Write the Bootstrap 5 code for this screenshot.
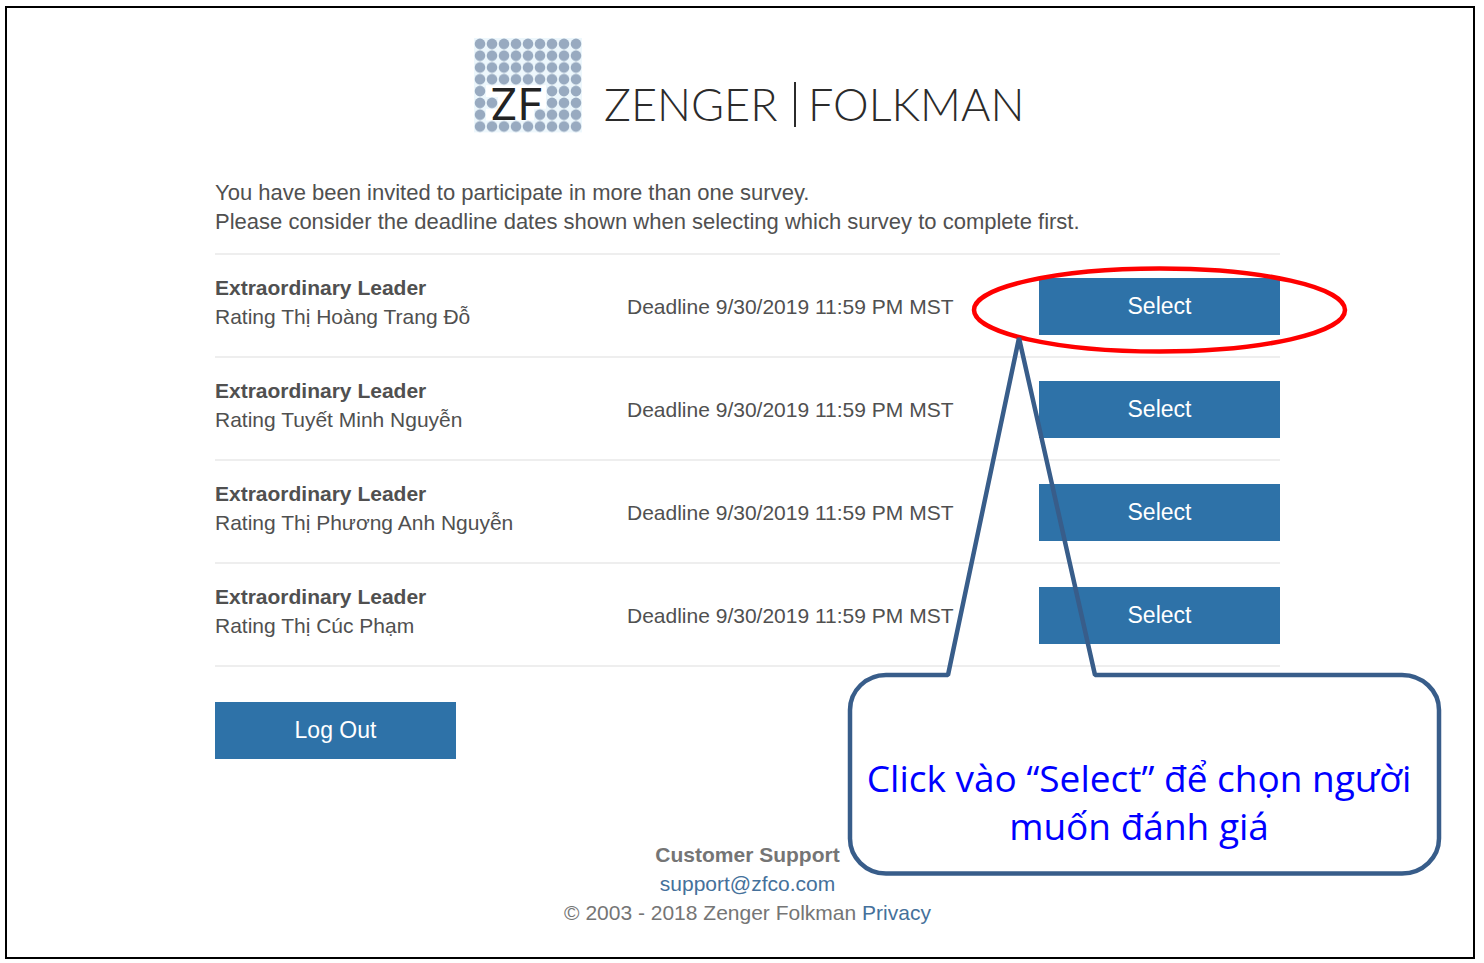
<!DOCTYPE html>
<html lang="en">
<head>
<meta charset="utf-8">
<meta name="viewport" content="width=device-width, initial-scale=1">
<title>Zenger Folkman – Surveys</title>
<link href="https://cdn.jsdelivr.net/npm/bootstrap@5.3.0/dist/css/bootstrap.min.css" rel="stylesheet">
<style>
  body { font-family: "Liberation Sans", Arial, sans-serif; font-size: 21px; line-height: 29px; color: #505050; background: #fff; }
  .page-frame { margin: 6px 9px 4px 5px; border: 2px solid #000; padding: 30px 0 30px 15px; min-height: calc(100vh - 10px); }
  .survey-page { max-width: 1065px; }
  .brand { max-width: 560px; height: 96px; }
  .brand text { font-family: Lato, sans-serif; fill: #2b2b2b; }
  .brand .monogram { font-family: Inter, sans-serif; fill: #222; }
  .intro { font-size: 22px; margin-top: 44px; margin-bottom: 17px; }
  .survey-item { display: grid; grid-template-columns: 412fr 412fr 241fr; align-items: center; padding: 18px 0 17px; border-top: 2px solid #eee; }
  .survey-name { padding-bottom: 8px; }
  .survey-list { border-bottom: 2px solid #eee; }
  .btn-zf { background: #2e72a8; color: #fff; border: 0; border-radius: 0; font-size: 23px; line-height: 29px; padding: 14px 0; }
  .btn-zf:hover { background: #245c89; color: #fff; }
  .logout { width: 241px; margin-top: 35px; }
  .page-foot { margin-top: 81px; color: #757575; }
  .page-foot a { color: #45719b; text-decoration: none; }
  .notes { left: 632px; top: 228px; width: 596px; height: 612px; pointer-events: none; }
  .note-text { left: 632px; top: 637px; width: 596px; height: 203px; padding: 79px 20px 0 8px; font-family: "Open Sans", sans-serif; font-size: 37px; line-height: 48px; color: #00f; }
</style>
</head>
<body>
<div class="page-frame">
  <main class="survey-page mx-auto position-relative">
    <header class="text-center">
      <svg class="brand w-100 overflow-visible" viewBox="-6 0 560 96" role="img" aria-label="Zenger Folkman">
        <defs>
          <pattern id="dots" width="12" height="11.8" patternUnits="userSpaceOnUse"><circle cx="6" cy="5.9" r="5.3" fill="#98aac0"/></pattern>
        </defs>
        <rect x="0" y="0" width="108" height="94.4" fill="#edf7fc"/>
        <rect x="0" y="0" width="108" height="94.4" fill="url(#dots)"/>
        <path d="M12 47.2H72V70.8H60V82.6H12V70.8H24V59H12Z" fill="#fff"/>
        <text class="monogram" x="16" y="82" font-size="44">ZF</text>
        <text x="130" y="83" font-size="45" font-weight="300">ZENGER</text>
        <path d="M321 44V89" stroke="#2b2b2b" stroke-width="2"/>
        <text x="334" y="83" font-size="45" font-weight="300">FOLKMAN</text>
      </svg>
    </header>

    <p class="intro">You have been invited to participate in more than one survey.<br>Please consider the deadline dates shown when selecting which survey to complete first.</p>

    <ul class="survey-list list-unstyled mb-0">
      <li class="survey-item"><div class="survey-name"><strong>Extraordinary Leader</strong><br>Rating Thị Hoàng Trang Đỗ</div><div>Deadline 9/30/2019 11:59 PM MST</div><button type="button" class="btn btn-zf">Select</button></li>
      <li class="survey-item"><div class="survey-name"><strong>Extraordinary Leader</strong><br>Rating Tuyết Minh Nguyễn</div><div>Deadline 9/30/2019 11:59 PM MST</div><button type="button" class="btn btn-zf">Select</button></li>
      <li class="survey-item"><div class="survey-name"><strong>Extraordinary Leader</strong><br>Rating Thị Phương Anh Nguyễn</div><div>Deadline 9/30/2019 11:59 PM MST</div><button type="button" class="btn btn-zf">Select</button></li>
      <li class="survey-item"><div class="survey-name"><strong>Extraordinary Leader</strong><br>Rating Thị Cúc Phạm</div><div>Deadline 9/30/2019 11:59 PM MST</div><button type="button" class="btn btn-zf">Select</button></li>
    </ul>

    <button type="button" class="btn btn-zf logout">Log Out</button>

    <footer class="page-foot text-center">
      <strong>Customer Support</strong><br>
      <a href="mailto:support@zfco.com">support@zfco.com</a><br>
      © 2003 - 2018 Zenger Folkman <a href="#privacy">Privacy</a>
    </footer>

    <!-- Tutorial callout over the first Select button -->
    <svg class="notes position-absolute overflow-visible" viewBox="0 0 596 612" aria-hidden="true">
      <ellipse cx="312.500" cy="44" rx="185.500" ry="41.500" fill="none" stroke="#f00" stroke-width="4.500"/>
      <path d="M39 409H101L172 72L248 409H555A37 35 0 0 1 592 444V572A37 35 0 0 1 555 607.500H39A36 35 0 0 1 3 572V444A36 35 0 0 1 39 409Z" fill="none" stroke="#385d8a" stroke-width="4.500" stroke-linejoin="bevel"/>
    </svg>
    <div class="note-text position-absolute text-center">Click vào “Select” để chọn người muốn đánh giá</div>
  </main>
</div>
<script src="https://cdn.jsdelivr.net/npm/bootstrap@5.3.0/dist/js/bootstrap.bundle.min.js"></script>
</body>
</html>
